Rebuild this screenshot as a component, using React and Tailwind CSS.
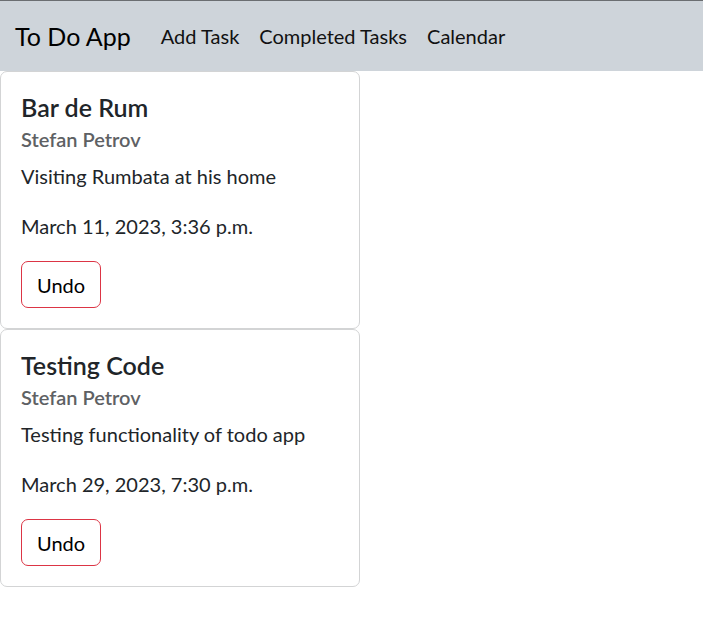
import React from 'react';

const TASKS = [
  {
    title: 'Bar de Rum',
    owner: 'Stefan Petrov',
    text: 'Visiting Rumbata at his home',
    date: 'March 11, 2023, 3:36 p.m.',
  },
  {
    title: 'Testing Code',
    owner: 'Stefan Petrov',
    text: 'Testing functionality of todo app',
    date: 'March 29, 2023, 7:30 p.m.',
  },
];

const TaskCard = ({ task }) => (
  <div className="w-[360px] bg-white border border-[#d3d4d5] rounded-[7px] p-5">
    <h5 className="text-[25px] leading-[30px] font-semibold text-[#212529]">{task.title}</h5>
    <h6 className="mt-[5px] mb-[10px] text-[20px] leading-[24px] font-semibold text-[#5e6164]">{task.owner}</h6>
    <p className="text-[20px] leading-[30px] text-[#212529] mb-5">{task.text}</p>
    <p className="text-[20px] leading-[30px] text-[#212529] mb-5">{task.date}</p>
    <button className="border border-[#dc3545] rounded-[7px] px-[15px] py-[7.5px] text-[20px] leading-[30px] text-black bg-white">
      Undo
    </button>
  </div>
);

export default function App() {
  return (
    <div className="min-h-screen bg-white border-t border-[#6b6e71]" style={{ fontFamily: 'Lato, sans-serif' }}>
      <nav className="bg-[#ced4da] h-[70px] px-[15px] flex items-center">
        <span className="text-[25px] leading-[37px] text-black mr-5">To Do App</span>
        <div className="flex items-center">
          {['Add Task', 'Completed Tasks', 'Calendar'].map((l) => (
            <a key={l} className="px-[10px] text-[20px] leading-[30px] text-[#111] cursor-pointer">{l}</a>
          ))}
        </div>
      </nav>
      <div className="flex flex-col">
        {TASKS.map((t) => <TaskCard key={t.title} task={t} />)}
      </div>
    </div>
  );
}
